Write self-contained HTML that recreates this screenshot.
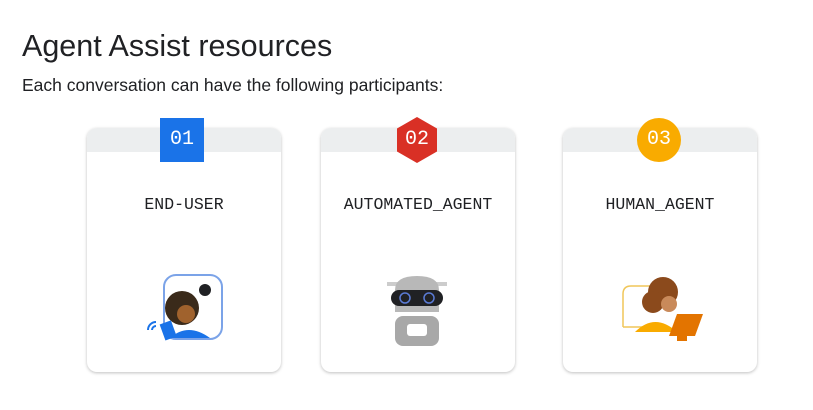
<html><head><style>
body{margin:0;width:813px;height:410px;background:#fff;font-family:"Liberation Sans",sans-serif;position:relative;overflow:hidden}
.t{position:absolute;left:22px;top:29px;font-size:30.5px;color:#202124}
.s{position:absolute;left:22px;top:75px;font-size:17.5px;color:#202124}
.c{position:absolute;top:128px;width:194px;height:244px;border-radius:10px;background:#fff;box-shadow:0 1px 3px rgba(0,0,0,.25);overflow:hidden}
.c .h{height:24px;background:#eceeef}
.l{position:absolute;top:195px;width:194px;text-align:center;font-family:"Liberation Mono",monospace;font-size:16.5px;color:#202124}
.b{position:absolute;top:118px;width:44px;height:44px;color:#fff;font-family:"Liberation Mono",monospace;font-size:20px;line-height:44px;text-align:center}
</style></head><body>
<div class="t">Agent Assist resources</div>
<div class="s">Each conversation can have the following participants:</div>
<div class="c" style="left:87px"><div class="h"></div></div>
<div class="c" style="left:321px"><div class="h"></div></div>
<div class="c" style="left:563px"><div class="h"></div></div>
<div class="l" style="left:87px">END-USER</div>
<div class="l" style="left:321px">AUTOMATED_AGENT</div>
<div class="l" style="left:563px">HUMAN_AGENT</div>
<div class="b" style="left:160px;background:#1a73e8">01</div>
<svg style="position:absolute;left:393px;top:116px" width="48" height="48"><polygon points="24,1 44,12.5 44,35.5 24,47 4,35.5 4,12.5" fill="#d93025"/></svg>
<div class="b" style="left:395px">02</div>
<div class="b" style="left:637px;background:#f9ab00;border-radius:50%">03</div>
<svg style="position:absolute;left:140px;top:270px" width="90" height="75">
<rect x="24" y="5" width="58" height="64" rx="12" fill="none" stroke="#7ba3e8" stroke-width="2"/>
<circle cx="65" cy="20" r="6" fill="#202124"/>
<circle cx="42" cy="38" r="17" fill="#3a2a1a"/>
<circle cx="46" cy="44" r="9" fill="#a0622d"/>
<path d="M30 68 Q48 52 70 68Z" fill="#1a73e8"/>
<rect x="22" y="52" width="12" height="17" fill="#1a73e8" transform="rotate(-20 28 60)"/>
<path d="M8 60 a8 8 0 0 1 8-8 M12 60 a4 4 0 0 1 4-4" stroke="#1a73e8" stroke-width="2" fill="none"/>
</svg>
<svg style="position:absolute;left:383px;top:272px" width="70" height="78">
<rect x="4" y="10" width="60" height="4" fill="#ccc"/>
<path d="M12 18 Q12 4 34 4 Q56 4 56 18 V40 H12Z" fill="#b8b8b8"/>
<rect x="8" y="18" width="52" height="16" rx="8" fill="#202124"/>
<circle cx="22" cy="26" r="5" fill="none" stroke="#5b7bd5" stroke-width="1.5"/>
<circle cx="46" cy="26" r="5" fill="none" stroke="#5b7bd5" stroke-width="1.5"/>
<rect x="12" y="44" width="44" height="30" rx="8" fill="#a8a8a8"/>
<rect x="24" y="52" width="20" height="12" rx="3" fill="#fff"/>
</svg>
<svg style="position:absolute;left:615px;top:272px" width="95" height="72">
<path d="M8 55 V22 Q8 14 16 14 H60 M8 55 L40 55" fill="none" stroke="#f0c659" stroke-width="1.5"/>
<circle cx="48" cy="20" r="15" fill="#8b4a1c"/>
<circle cx="38" cy="30" r="11" fill="#8b4a1c"/>
<circle cx="54" cy="32" r="8" fill="#c98a5a"/>
<path d="M20 60 Q40 40 62 60Z" fill="#f9ab00"/>
<polygon points="62,42 88,42 80,64 54,64" fill="#e37400"/>
<rect x="62" y="64" width="10" height="5" fill="#e37400"/>
</svg>
</body></html>
